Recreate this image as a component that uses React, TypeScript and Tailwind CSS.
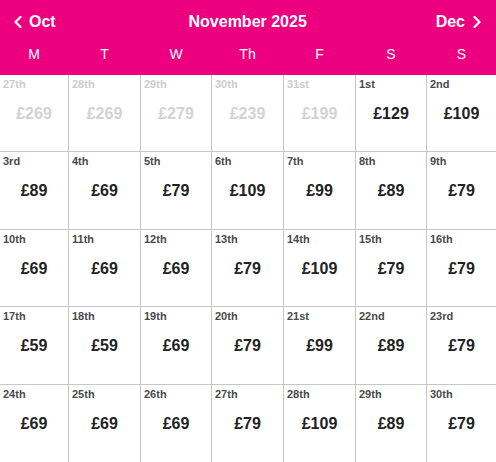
import React from "react"

interface Day {
  label: string
  price: string
  past?: boolean
}

const days: Day[] = [
  { label: "27th", price: "£269", past: true },
  { label: "28th", price: "£269", past: true },
  { label: "29th", price: "£279", past: true },
  { label: "30th", price: "£239", past: true },
  { label: "31st", price: "£199", past: true },
  { label: "1st", price: "£129" },
  { label: "2nd", price: "£109" },
  { label: "3rd", price: "£89" },
  { label: "4th", price: "£69" },
  { label: "5th", price: "£79" },
  { label: "6th", price: "£109" },
  { label: "7th", price: "£99" },
  { label: "8th", price: "£89" },
  { label: "9th", price: "£79" },
  { label: "10th", price: "£69" },
  { label: "11th", price: "£69" },
  { label: "12th", price: "£69" },
  { label: "13th", price: "£79" },
  { label: "14th", price: "£109" },
  { label: "15th", price: "£79" },
  { label: "16th", price: "£79" },
  { label: "17th", price: "£59" },
  { label: "18th", price: "£59" },
  { label: "19th", price: "£69" },
  { label: "20th", price: "£79" },
  { label: "21st", price: "£99" },
  { label: "22nd", price: "£89" },
  { label: "23rd", price: "£79" },
  { label: "24th", price: "£69" },
  { label: "25th", price: "£69" },
  { label: "26th", price: "£69" },
  { label: "27th", price: "£79" },
  { label: "28th", price: "£109" },
  { label: "29th", price: "£89" },
  { label: "30th", price: "£79" },
]

const weekdays = ["M", "T", "W", "Th", "F", "S", "S"]

const cols = "grid grid-cols-[68px_72px_71px_72px_72px_71px_70px]"

function Chevron({ dir }: { dir: "left" | "right" }) {
  return (
    <svg width="8" height="12" viewBox="0 0 8 12" fill="none" className="shrink-0">
      <polyline
        points={dir === "left" ? "6.5,1 1.5,6 6.5,11" : "1.5,1 6.5,6 1.5,11"}
        stroke="white"
        strokeWidth="2.2"
        strokeLinecap="round"
        strokeLinejoin="round"
      />
    </svg>
  )
}

export default function App() {
  return (
    <div className="w-[496px] h-[462px] bg-white overflow-hidden font-['Liberation_Sans',Arial,sans-serif]">
      <div className="bg-[#ec0080] text-white pb-[10px]">
        <div className="h-[44px] flex items-center justify-between pl-[14px] pr-[15px]">
          <div className="flex items-center gap-[7px] text-[16px] font-bold">
            <Chevron dir="left" />
            <span>Oct</span>
          </div>
          <div className="text-[16px] font-bold pl-[4px]">November 2025</div>
          <div className="flex items-center gap-[8px] text-[16px] font-bold">
            <span>Dec</span>
            <Chevron dir="right" />
          </div>
        </div>
        <div className={`${cols} h-[21px]`}>
          {weekdays.map((d, i) => (
            <div key={i} className={`text-center text-[14px] leading-[21px] ${i > 0 ? "pl-px" : ""}`}>
              {d}
            </div>
          ))}
        </div>
      </div>

      <div className={`${cols} grid-rows-5 h-[387px]`}>
        {days.map((day, i) => {
          const col = i % 7
          const row = Math.floor(i / 7)
          return (
            <div
              key={i}
              className={`flex flex-col pt-[3px] pl-[3px] border-[#c6c6c6] ${col > 0 ? "border-l" : ""} ${
                row < 4 ? "border-b" : ""
              }`}
            >
              <div
                className={`text-[11px] leading-[13px] font-bold ${day.past ? "text-[#cccccc]" : "text-[#4a4a4a]"}`}
              >
                {day.label}
              </div>
              <div
                className={`mt-[13px] pr-[3px] text-center text-[16px] leading-[20px] font-bold ${
                  day.past ? "text-[#d2d2d2]" : "text-[#222222]"
                }`}
              >
                {day.price}
              </div>
            </div>
          )
        })}
      </div>
    </div>
  )
}
